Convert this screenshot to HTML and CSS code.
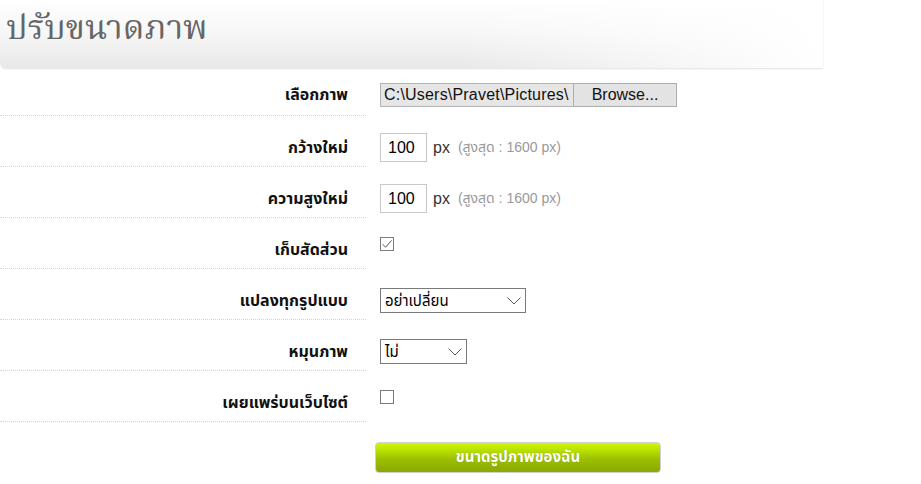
FILE: index.html
```html
<!DOCTYPE html>
<html lang="th">
<head>
  <meta charset="UTF-8">
  <title>ปรับขนาดภาพ</title>
  <link rel="stylesheet" href="styles.css">
</head>
<body>

  <div class="page-head">
    <h1>ปรับขนาดภาพ</h1>
  </div>

  <form class="resize-form" onsubmit="return false;">
    <div class="row first">
      <div class="label">เลือกภาพ</div>
      <div class="field">
        <div class="file-input">
          <span class="file-path">C:\Users\Pravet\Pictures\</span>
          <span class="file-btn">Browse...</span>
        </div>
      </div>
    </div>

    <div class="row">
      <div class="label">กว้างใหม่</div>
      <div class="field">
        <input class="num" type="text" value="100">
        <span class="unit">px</span>
        <span class="hint">(สูงสุด : 1600 px)</span>
      </div>
    </div>

    <div class="row">
      <div class="label">ความสูงใหม่</div>
      <div class="field">
        <input class="num" type="text" value="100">
        <span class="unit">px</span>
        <span class="hint">(สูงสุด : 1600 px)</span>
      </div>
    </div>

    <div class="row">
      <div class="label">เก็บสัดส่วน</div>
      <div class="field">
        <span class="check">
          <svg width="12" height="12" viewBox="0 0 12 12"><path d="M1.5 6.2 L4.6 9.2 L10.6 2.4" fill="none" stroke="#444" stroke-width="0.9"/></svg>
        </span>
      </div>
    </div>

    <div class="row">
      <div class="label">แปลงทุกรูปแบบ</div>
      <div class="field">
        <div class="select wide">
          <span>อย่าเปลี่ยน</span>
          <svg width="14" height="8" viewBox="0 0 14 8"><path d="M0.5 0.5 L7 7 L13.5 0.5" fill="none" stroke="#555" stroke-width="1"/></svg>
        </div>
      </div>
    </div>

    <div class="row">
      <div class="label">หมุนภาพ</div>
      <div class="field">
        <div class="select narrow">
          <span>ไม่</span>
          <svg width="14" height="8" viewBox="0 0 14 8"><path d="M0.5 0.5 L7 7 L13.5 0.5" fill="none" stroke="#555" stroke-width="1"/></svg>
        </div>
      </div>
    </div>

    <div class="row">
      <div class="label">เผยแพร่บนเว็บไซต์</div>
      <div class="field">
        <span class="check"></span>
      </div>
    </div>

    <button class="submit" type="submit">ขนาดรูปภาพของฉัน</button>
  </form>

</body>
</html>
```

FILE: styles.css
```css
body {
  margin: 0;
  background: #fff;
  font-family: Tahoma, "Liberation Sans", "Noto Sans Thai", sans-serif;
  color: #111;
}

.page-head {
  width: 823px;
  height: 68px;
  border-bottom-left-radius: 6px;
  background:
    linear-gradient(to right, rgba(255,255,255,0) 55%, #fff 100%),
    linear-gradient(to bottom, #fff 0%, #f6f6f6 50%, #e8e8e8 100%);
  box-shadow: 0 1px 2px rgba(0, 0, 0, 0.12);
}

.page-head h1 {
  margin: 0;
  padding: 8px 0 0 6px;
  font-family: "Noto Serif Thai", "Noto Sans Thai Looped", "Liberation Serif", serif;
  font-weight: normal;
  font-size: 34px;
  line-height: 44px;
  color: #666;
}

.resize-form {
  margin-top: 1px;
}

.row {
  display: flex;
}

.label {
  width: 366px;
  box-sizing: border-box;
  padding: 17px 18px 4px 0;
  height: 51px;
  border-bottom: 1px dotted #d4d4d4;
  display: flex;
  align-items: center;
  justify-content: flex-end;
  font-size: 16px;
  font-weight: bold;
}

.field {
  padding: 17px 0 4px 14px;
  height: 29px;
  display: flex;
  align-items: center;
}

.row.first .label {
  height: 47px;
  padding-top: 11px;
  padding-bottom: 6px;
}

.row.first .field {
  padding-top: 11px;
  padding-bottom: 6px;
}

/* file chooser */
.file-input {
  display: flex;
  height: 24px;
  font-family: "Liberation Sans", Arial, sans-serif;
  font-size: 16px;
}

.file-path {
  width: 189px;
  overflow: hidden;
  white-space: nowrap;
  background: #e6e6e6;
  border: 1px solid #b4b4b4;
  border-right: none;
  padding-left: 3px;
  line-height: 22px;
  letter-spacing: 0.2px;
}

.file-btn {
  width: 102px;
  text-align: center;
  background: #e3e3e3;
  border: 1px solid #adadad;
  line-height: 22px;
}

/* number inputs */
.num {
  width: 47px;
  height: 29px;
  box-sizing: border-box;
  border: 1px solid #c8c8c8;
  padding: 0 0 0 7px;
  margin: 0;
  font-family: "Liberation Sans", Arial, sans-serif;
  font-size: 16px;
  color: #000;
}

.unit {
  margin-left: 6px;
  font-family: "Liberation Sans", Arial, sans-serif;
  font-size: 16px;
  color: #333;
}

.hint {
  margin-left: 8px;
  font-size: 14px;
  color: #999;
}

/* checkboxes */
.check {
  width: 14px;
  height: 14px;
  box-sizing: border-box;
  border: 1px solid #7a7a7a;
  background: #fff;
  display: flex;
  align-items: center;
  justify-content: center;
  align-self: flex-start;
  margin-top: 2px;
}

/* selects */
.select {
  height: 25px;
  box-sizing: border-box;
  border: 1px solid #7a7a7a;
  display: flex;
  align-items: center;
  justify-content: space-between;
  padding: 0 4px 0 4px;
  font-size: 15px;
  color: #000;
}

.select.wide {
  width: 146px;
}

.select.narrow {
  width: 87px;
}

.select span {
  line-height: 23px;
}

.submit {
  display: block;
  margin: 20px 0 0 375px;
  width: 286px;
  height: 31px;
  border: 1px solid #d0d0d0;
  border-radius: 4px;
  background: linear-gradient(to bottom, #d2f800 0%, #b4dc00 30%, #9cc000 55%, #8aa800 100%);
  color: #fff;
  font-family: Tahoma, "Liberation Sans", "Noto Sans Thai", sans-serif;
  font-size: 15px;
  font-weight: bold;
  text-shadow: 0 0 1px rgba(0, 0, 0, 0.2);
  cursor: pointer;
}
```
